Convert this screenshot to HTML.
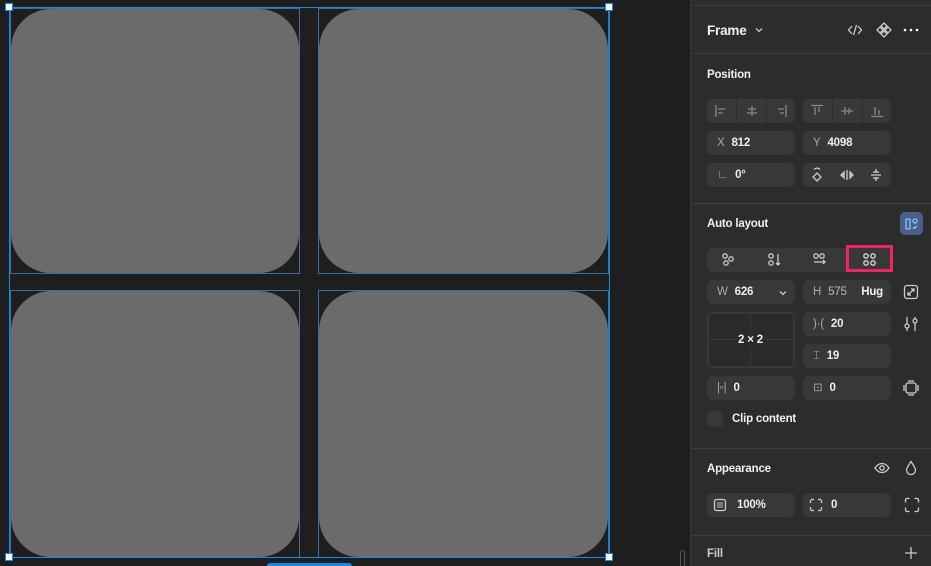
<!DOCTYPE html><html><head><style>
*{box-sizing:border-box;margin:0;padding:0}
html,body{width:931px;height:566px;overflow:hidden}
body{background:#1e1e1e;position:relative;font-family:"Liberation Sans",sans-serif;color:#fff}
.a{position:absolute}
.cell{position:absolute;border:1.5px solid #3b6f9e}
.cell div{position:absolute;inset:0;background:#6b6b6b;border-radius:40px}
#p{left:690px;top:0;width:241px;height:566px;background:#2c2c2c;border-left:1px solid #383838}
.sep{position:absolute;left:0;width:241px;height:1px;background:#3e3e3e}
.t{position:absolute;font-size:11.5px;font-weight:bold;color:#f0f0f0;letter-spacing:-0.2px}
.f{position:absolute;background:#383838;border-radius:5px;height:24px;font-size:11.5px;color:#eee;font-weight:bold;line-height:25px;padding-left:10px;letter-spacing:-0.2px}
.f span{color:#aaa;font-weight:normal;margin-right:7px}
svg{position:absolute;fill:none;stroke:#ccc;stroke-width:1.3}
</style></head><body>
<div class="cell" style="left:10px;top:8px;width:290px;height:266px"><div></div></div>
<div class="cell" style="left:318px;top:8px;width:291px;height:266px"><div></div></div>
<div class="cell" style="left:10px;top:290px;width:290px;height:268px"><div></div></div>
<div class="cell" style="left:318px;top:290px;width:291px;height:268px"><div></div></div>
<div class="a" style="left:9px;top:7px;width:601px;height:551px;border:1.5px solid #0d8ce9"></div>
<div class="a" style="left:5px;top:3px;width:8px;height:8px;background:#fff;border:1.5px solid #0d8ce9"></div>
<div class="a" style="left:605px;top:3px;width:8px;height:8px;background:#fff;border:1.5px solid #0d8ce9"></div>
<div class="a" style="left:5px;top:553px;width:8px;height:8px;background:#fff;border:1.5px solid #0d8ce9"></div>
<div class="a" style="left:605px;top:553px;width:8px;height:8px;background:#fff;border:1.5px solid #0d8ce9"></div>
<div class="a" style="left:267px;top:563px;width:85px;height:3px;background:#0d8ce9;border-radius:3px 3px 0 0"></div>
<div class="a" style="left:680px;top:550px;width:5px;height:16px;border:1px solid #555;border-bottom:none;border-radius:3px 3px 0 0"></div>
<div id="p" class="a">
<div class="sep" style="top:5px"></div>
<div class="t" style="left:16px;top:23px;font-size:13.5px">Frame</div>
<svg style="left:64px;top:27px" width="8" height="6"><path d="M1 1.5l3 3 3-3"/></svg>
<svg style="left:156px;top:22px" width="16" height="16"><path d="M5 4L1.5 8 5 12M11 4l3.5 4-3.5 4M9.5 3l-3 10"/></svg>
<svg style="left:184px;top:21px" width="18" height="18"><path d="M9 2l3 3-3 3-3-3zM9 10l3 3-3 3-3-3zM5 6l3 3-3 3-3-3zM13 6l3 3-3 3-3-3z"/></svg>
<svg style="left:211px;top:24px" width="18" height="12"><circle cx="3" cy="6" r="1.3" fill="#fff" stroke="none"/><circle cx="9" cy="6" r="1.3" fill="#fff" stroke="none"/><circle cx="15" cy="6" r="1.3" fill="#fff" stroke="none"/></svg>
<div class="sep" style="top:53px"></div>
<div class="t" style="left:16px;top:69px">Position</div>
<div class="f" style="left:16px;top:99px;width:88px"></div>
<div class="f" style="left:112px;top:99px;width:88px"></div>
<div class="a" style="left:45px;top:99px;width:1px;height:24px;background:#2c2c2c"></div>
<div class="a" style="left:75px;top:99px;width:1px;height:24px;background:#2c2c2c"></div>
<div class="a" style="left:141px;top:99px;width:1px;height:24px;background:#2c2c2c"></div>
<div class="a" style="left:171px;top:99px;width:1px;height:24px;background:#2c2c2c"></div>
<svg style="left:23px;top:104px;stroke:#888" width="180" height="14"><path d="M2 1v12M4 5h7M4 9h5M34 5h8M33 9h10M38 2v10M64 5h6M66 9h4M72 1v12M97 1.5h12M101 3v8M105 3v5M127 7h12M131 3v8M135 4v6M157 12.5h12M161 3v8M165 6v5"/></svg>
<div class="f" style="left:16px;top:131px;width:88px"><span>X</span>812</div>
<div class="f" style="left:112px;top:131px;width:88px"><span>Y</span>4098</div>
<div class="f" style="left:16px;top:163px;width:88px"><span>∟</span>0°</div>
<div class="f" style="left:112px;top:163px;width:88px"></div>
<svg style="left:121px;top:166px" width="80" height="18"><path d="M2 3.5a4 4 0 0 1 6 0M5 7l4 4-4 4-4-4z"/><path d="M29 9h3M38 9h3M35 4v10M32 6v6l-3-3zM38 6v6l3-3z" /><path d="M59 9h10M64 3v4M64 11v4M61 6h6M61 12h6"/></svg>
<div class="sep" style="top:203px"></div>
<div class="t" style="left:16px;top:218px">Auto layout</div>
<div class="a" style="left:209px;top:212px;width:23px;height:23px;background:#4a5f8a;border-radius:5px"></div>
<svg style="left:213px;top:216px;stroke:#8ec4ff" width="16" height="16"><rect x="2" y="3" width="4" height="10" rx="1"/><circle cx="11" cy="5" r="2"/><path d="M9 11l1.5 1.5L13 10"/></svg>
<div class="f" style="left:16px;top:248px;width:184px"></div>
<svg style="left:30px;top:252px" width="120" height="16"><circle cx="4" cy="4" r="2.2"/><circle cx="10" cy="7" r="2.2"/><circle cx="5" cy="11" r="2.2"/><circle cx="50" cy="4" r="2.2"/><circle cx="50" cy="11" r="2.2"/><path d="M57 2v11M55 11l2 2 2-2"/><circle cx="95" cy="4" r="2.2"/><circle cx="101" cy="4" r="2.2"/><path d="M93 10h11M102 8l2 2-2 2"/></svg>
<div class="a" style="left:155px;top:245px;width:47px;height:27px;border:3px solid #f0245f"></div>
<svg style="left:171px;top:252px;stroke:#ddd" width="16" height="16"><circle cx="4" cy="4" r="2.2"/><circle cx="11" cy="4" r="2.2"/><circle cx="4" cy="11" r="2.2"/><circle cx="11" cy="11" r="2.2"/></svg>
<div class="f" style="left:16px;top:280px;width:88px"><span>W</span>626</div>
<svg style="left:88px;top:290px" width="8" height="6"><path d="M1 1.5l3 3 3-3"/></svg>
<div class="f" style="left:112px;top:280px;width:88px"><span>H</span><span style="color:#bbb">575</span><b style="position:absolute;right:8px">Hug</b></div>
<svg style="left:212px;top:284px" width="16" height="16"><rect x="1.5" y="1.5" width="13" height="13" rx="2.5"/><path d="M5 11l6-6M5 8v3h3M11 8V5H8"/></svg>
<div class="a" style="left:16px;top:312px;width:88px;height:56px;border:2px solid #383838;border-radius:5px;background:#2a2a2a"></div>
<div class="a" style="left:59px;top:314px;width:1px;height:52px;background:#383838"></div>
<div class="a" style="left:18px;top:339px;width:84px;height:1px;background:#383838"></div>
<div class="t" style="left:46px;top:334px;background:#2a2a2a;padding:0 1px">2 × 2</div>
<div class="f" style="left:112px;top:312px;width:88px"><span>)·(</span>20</div>
<div class="f" style="left:112px;top:344px;width:88px"><span>⌶</span>19</div>
<svg style="left:212px;top:316px" width="16" height="16"><path d="M4 1v14M12 1v14"/><circle cx="4" cy="10" r="2" fill="#2c2c2c"/><circle cx="12" cy="5" r="2" fill="#2c2c2c"/></svg>
<div class="f" style="left:16px;top:376px;width:88px"><span>|▫|</span>0</div>
<div class="f" style="left:112px;top:376px;width:88px"><span>⊡</span>0</div>
<svg style="left:212px;top:380px" width="16" height="16"><rect x="3" y="3" width="10" height="10" rx="2"/><path d="M1 5v6M15 5v6M5 1h6M5 15h6"/></svg>
<div class="a" style="left:16px;top:411px;width:16px;height:16px;background:#383838;border-radius:4px"></div>
<div class="t" style="left:41px;top:413px">Clip content</div>
<div class="sep" style="top:448px"></div>
<div class="t" style="left:16px;top:463px">Appearance</div>
<svg style="left:183px;top:462px" width="16" height="12"><path d="M1 6c4-6 10-6 14 0-4 6-10 6-14 0z"/><circle cx="8" cy="6" r="2.2"/></svg>
<svg style="left:214px;top:460px" width="12" height="16"><path d="M6 1.5C3 6 1.5 8 1.5 10a4.5 4.5 0 0 0 9 0c0-2-1.5-4-4.5-8.5z"/></svg>
<div class="f" style="left:16px;top:493px;width:88px;padding-left:30px">100%</div>
<svg style="left:22px;top:498px" width="14" height="14"><rect x="1.5" y="1.5" width="11" height="11" rx="2"/><rect x="4" y="4" width="6" height="6" fill="#777" stroke="none"/></svg>
<div class="f" style="left:112px;top:493px;width:88px;padding-left:28px">0</div>
<svg style="left:118px;top:498px" width="14" height="14"><path d="M1.5 5V3a1.5 1.5 0 0 1 1.5-1.5h2M9 1.5h2A1.5 1.5 0 0 1 12.5 3v2M12.5 9v2a1.5 1.5 0 0 1-1.5 1.5H9M5 12.5H3A1.5 1.5 0 0 1 1.5 11V9"/></svg>
<svg style="left:213px;top:497px" width="16" height="16"><path d="M1.5 5.5V3a1.5 1.5 0 0 1 1.5-1.5h2.5M10.5 1.5H13A1.5 1.5 0 0 1 14.5 3v2.5M14.5 10.5V13a1.5 1.5 0 0 1-1.5 1.5h-2.5M5.5 14.5H3A1.5 1.5 0 0 1 1.5 13v-2.5"/></svg>
<div class="sep" style="top:535px"></div>
<div class="t" style="left:16px;top:548px;color:#ccc">Fill</div>
<svg style="left:213px;top:546px" width="14" height="14"><path d="M7 1v12M1 7h12"/></svg>
</div>
</body></html>
